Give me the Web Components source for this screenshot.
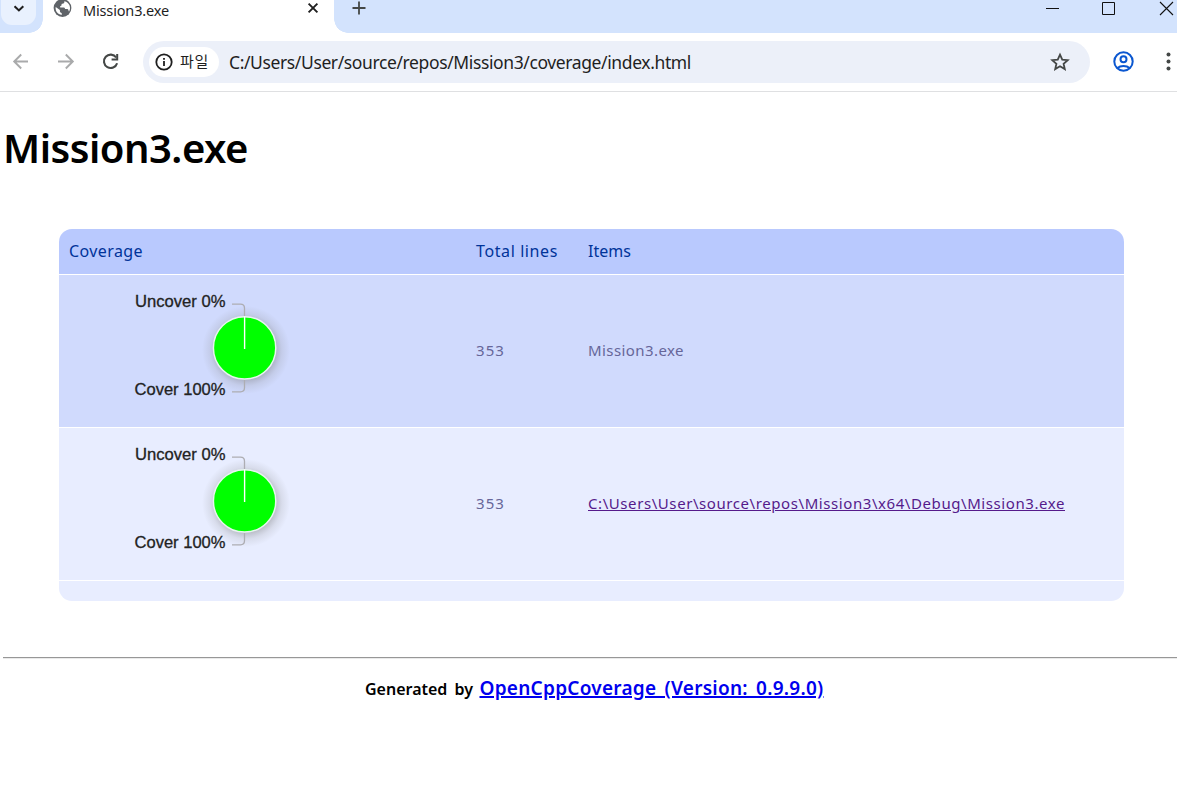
<!DOCTYPE html>
<html lang="ko">
<head>
<meta charset="utf-8">
<title>Mission3.exe</title>
<style>
html,body{margin:0;background:#fff;overflow:hidden}
body{font-family:"Noto Sans","Noto Sans CJK KR",sans-serif;color:#000}
</style>
</head>
<body>
<browser-window>
  <coverage-report heading="Mission3.exe">
    <coverage-row><span slot="item"><fit-text width="96">Mission3.exe</fit-text></span></coverage-row>
    <coverage-row class="link"><a slot="item" href="#"><fit-text width="477">C:\Users\User\source\repos\Mission3\x64\Debug\Mission3.exe</fit-text></a></coverage-row>
  </coverage-report>
</browser-window>
<script>
const define = (name, html, init) => customElements.define(name, class extends HTMLElement {
  constructor() {
    super();
    const t = document.createElement('template');
    t.innerHTML = html;
    this.attachShadow({mode: 'open'}).append(t.content.cloneNode(true));
  }
  connectedCallback() { if (init) init(this); }
});

define('tab-strip', `<style>
:host{display:flex;height:33px;background:#d3e3fd;font-size:14.5px;color:#1f1f1f}
.left{width:43px;height:33px;position:relative;display:flex}
.search{margin-left:1px;width:35px;height:25px;background:#e9f1fe;border-radius:0 0 11px 11px;display:block}
.tab{width:291px;background:#fff;display:flex;position:relative}
.tab:before,.tab:after{content:"";position:absolute;bottom:0;width:14px;height:14px}
.tab:before{left:-14px;background:radial-gradient(circle at 0 0,transparent 13.5px,#fff 14px)}
.tab:after{right:-14px;background:radial-gradient(circle at 100% 0,transparent 13.5px,#fff 14px)}
.globe{margin:-1px 0 0 10px;width:19px;height:19px;flex:none}
fit-text{margin:0 0 0 11px;line-height:20px}
.x{margin:2px 0 0 auto;width:12px;height:12px;padding-right:15px}
.plus{margin:1px 0 0 18px;width:14px;height:14px}
.win{margin-left:auto;width:132px;height:20px}
</style>
<div class="left"><svg class="search" viewBox="1 0 35 25"><path d="M14.5 6.2l4.4 4.2 4.4-4.2" fill="none" stroke="#1f1f1f" stroke-width="2.1"/></svg></div>
<div class="tab"><svg class="globe" viewBox="0 0 19 19"><circle cx="9.500" cy="9" r="8.900" fill="#5f6368"/><path d="M11.300 2.300c.3 1.500-.3 2.500-1.900 2.500-.7 0-.9.400-.9 1.100 0 .8-.5 1.100-1.300 1.200v1.300h3.200c1.100 0 1.700.7 1.700 1.700h1.700c.9 0 1.500.5 1.700 1.300l.5 1.300c2.500-4 .4-9.300-4.700-10.400zM2.700 8c-.6 4 2 7.500 6 7.900v-2c-1.300 0-1.800-.8-1.800-1.900v-.9z" fill="#fff"/></svg>
<fit-text width="86">Mission3.exe</fit-text>
<svg class="x" viewBox="0 0 12 12"><path d="M1.600 1.600l8.800 8.800m0-8.800l-8.800 8.800" stroke="#1f1f1f" stroke-width="1.900"/></svg></div>
<svg class="plus" viewBox="0 0 14 14"><path d="M7 .5v13M.5 7h13" stroke="#444746" stroke-width="1.8"/></svg>
<svg class="win" viewBox="1045 0 132 20" fill="none" stroke="#111" stroke-width="1"><path d="M1046 8.5h13M1102.500 2.500h12v12h-12z"/><path d="M1160 2l13 13m0-13l-13 13" stroke-width="1.1"/></svg>`);

define('address-bar', `<style>
:host{display:flex;height:58px;border-bottom:1px solid #dfe0e2;align-items:center;color:#1f1f1f;background:#fff}
.nav{width:143px;height:58px;flex:none}
.box{display:flex;align-items:center;width:947px;height:42px;border-radius:21px;background:#ecf0f9;flex:none}
.chip{margin-left:6px;width:70px;height:30px;border-radius:15px;background:#fff;display:flex;align-items:center}
.chip svg{width:18px;height:18px;margin:0 7px 0 6px}
.chip fit-text{font:15px/22px "Noto Sans CJK KR",sans-serif;margin-top:-2px}
.url{margin-left:10px;font-size:17.500px;line-height:24px}
.star{width:20px;height:20px;margin:0 20px 0 auto}
.right{width:87px;height:58px}
</style>
<svg class="nav" viewBox="0 33 143 58" fill="none" stroke-width="1.9"><g stroke="#a9aaab"><path d="M28 61.500H14.500M21.200 54.500l-7 7 7 7M58 61.500h14.500M65.800 54.500l7 7-7 7"/></g><path d="M116.200 57.500a6.700 6.700 0 1 0 .9 5.700" stroke="#444746" stroke-width="2.100"/><path d="M118.200 54v6.600h-6.600v-2h4.600V54z" fill="#444746"/></svg>
<div class="box"><div class="chip"><svg viewBox="0 0 18 18"><circle cx="9" cy="9" r="7.700" fill="none" stroke="#1f1f1f" stroke-width="1.800"/><path d="M8.100 8h1.800v5H8.100zM8.100 5h1.800v1.800H8.100z" fill="#1f1f1f"/></svg><fit-text width="29">파일</fit-text></div>
<fit-text class="url" width="462">C:/Users/User/source/repos/Mission3/coverage/index.html</fit-text>
<svg class="star" viewBox="0 0 20 20"><path d="M10 2.600l2.250 5 5.450.5-4.120 3.600 1.220 5.400L10 14.250 5.200 17.100l1.220-5.400L2.300 8.100l5.450-.5z" fill="none" stroke="#444746" stroke-width="1.800"/></svg></div>
<svg class="right" viewBox="1090 33 87 58"><g fill="none" stroke="#0b57d0" stroke-width="2"><circle cx="1123.500" cy="61.500" r="9.200"/><circle cx="1123.500" cy="59.200" r="3"/><path d="M1117 68.200c3.800-3 9.200-3 13 0"/></g><g fill="#444746"><circle cx="1168.500" cy="54.600" r="2"/><circle cx="1168.500" cy="61.600" r="2"/><circle cx="1168.500" cy="68.500" r="2"/></g></svg>`);

define('browser-window', `<style>:host{display:block;width:1177px;height:798px;overflow:hidden;background:#fff}</style>
<tab-strip></tab-strip><address-bar></address-bar><slot></slot>`);

define('coverage-pie', `<style>:host{display:block}svg{display:block;width:240px;height:152px}
text{font:16.4px "Liberation Sans",Arial,sans-serif;fill:#222;stroke:#222;stroke-width:.3px}</style>
<svg viewBox="59 275 240 152">
<defs><radialGradient id="s"><stop offset=".68" stop-color="#777" stop-opacity=".38"/><stop offset=".82" stop-color="#888" stop-opacity=".16"/><stop offset="1" stop-color="#888" stop-opacity="0"/></radialGradient></defs>
<circle cx="246" cy="350" r="44" fill="url(#s)"/>
<g fill="none" stroke="#adadb2" stroke-width="1.300"><path d="M232 304.200h8.500q4 0 4 4V316M232 391.800h8.500q4 0 4-4V380"/></g>
<circle cx="244.600" cy="347.900" r="31.200" fill="#0f0" stroke="#e8f5f0" stroke-width="1.500"/>
<path d="M244.600 316.500V349" stroke="#fff" stroke-width="1.400"/>
<text x="135" y="307" textLength="90.500" lengthAdjust="spacingAndGlyphs">Uncover 0%</text>
<text x="134.500" y="395" textLength="91" lengthAdjust="spacingAndGlyphs">Cover 100%</text>
</svg>`);

define('coverage-row', `<style>
:host{display:grid;grid-template-columns:417px 112px 1fr;height:152px;align-items:center;background:#d0dafd;border-bottom:1px solid #fff;color:#669;font-size:15px}
:host(.link){background:#e8edff}
.t{padding-bottom:2px;line-height:20px}
::slotted(a){color:#551a8b;text-decoration:underline}
</style><coverage-pie></coverage-pie><div class="t"><fit-text width="29">353</fit-text></div><div class="t"><slot name="item"></slot></div>`);

define('coverage-report', `<style>
:host{display:block}
h1{margin:27px 0 0 3px;font-size:40px;line-height:58px;height:58px;font-weight:600}
.table{margin:52px 0 0 59px;width:1065px;border-radius:13px;overflow:hidden}
.head{display:grid;grid-template-columns:407px 112px 1fr;padding-left:10px;height:45px;align-items:center;background:#b9c9fe;border-bottom:1px solid #fff;color:#039;font-size:16px;line-height:22px}
.head>*{margin-top:-1px}
.foot{height:20px;background:#e8edff}
hr{margin:56px 0 0 3px;border:0;border-top:1px solid #979797;border-bottom:1px solid #eaeaea}
.gen{display:flex;align-items:baseline;padding-left:365px;margin-top:14px;font-weight:600;font-size:16px;line-height:30px;word-spacing:3px}
a{color:#00e;font-size:19px;margin-left:6.500px;text-decoration:underline;text-decoration-thickness:2px}
</style>
<h1><fit-text width="245"></fit-text></h1>
<div class="table"><div class="head"><div><fit-text width="74">Coverage</fit-text></div><div><fit-text width="82">Total lines</fit-text></div><div><fit-text width="43">Items</fit-text></div></div>
<slot></slot><div class="foot"></div></div>
<hr>
<div class="gen"><fit-text width="108">Generated by</fit-text><a href="#"><fit-text width="344">OpenCppCoverage (Version: 0.9.9.0)</fit-text></a></div>`,
el => { el.shadowRoot.querySelector('h1 fit-text').textContent = el.getAttribute('heading'); });

/* Text whose tracking is adjusted so the run fills the given width. */
define('fit-text', `<style>:host{display:inline;white-space:nowrap}</style><slot></slot>`, el => {
  requestAnimationFrame(() => {
    const n = el.textContent.length, w = el.getBoundingClientRect().width;
    el.style.letterSpacing = ((+el.getAttribute('width') - w) / n).toFixed(3) + 'px';
  });
});
</script>
</body>
</html>
